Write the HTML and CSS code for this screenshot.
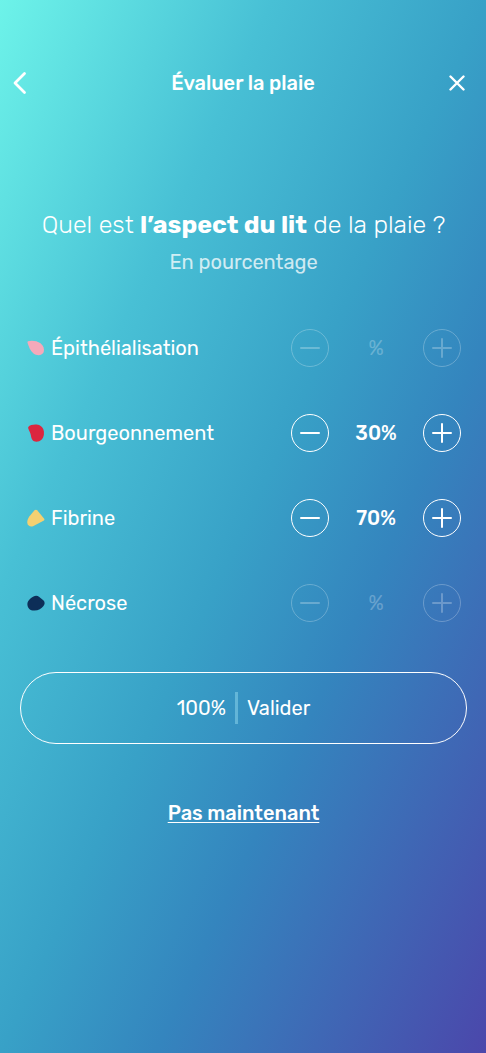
FILE: index.html
```html
<!DOCTYPE html>
<html lang="fr">
<head>
<meta charset="utf-8">
<meta name="viewport" content="width=device-width, initial-scale=1">
<title>Évaluer la plaie</title>
<link rel="stylesheet" href="styles.css">
</head>
<body>
<header class="topbar">
  <button class="icon-button" type="button" aria-label="Retour">
    <svg width="16" height="24" viewBox="0 0 16 24"><path d="M12.500 2.500L3 12L12.500 21.500" stroke-width="2.800"/></svg>
  </button>
  <h1 class="title">Évaluer la plaie</h1>
  <button class="icon-button" type="button" aria-label="Fermer">
    <svg width="16" height="16" viewBox="0 0 16 16"><path d="M1.500 1.500L14.500 14.500M14.500 1.500L1.500 14.500" stroke-width="2.400"/></svg>
  </button>
</header>
<main class="content">
  <h2 class="question">Quel est <strong>l’aspect du lit</strong> de la plaie ?</h2>
  <p class="hint">En pourcentage</p>
  <ul class="tissues">
    <li class="tissue">
      <svg class="swatch" width="18" height="18" viewBox="0 0 18 18"><path fill="#f5a9ba" d="M1 2.200C4 1.200 10 1.500 13.500 4.300C16.500 6.600 17.600 10 16.700 13C15.800 16.500 10 17.200 6.500 14.500C3.300 12 1.800 7.500.600 4C.400 3.200.500 2.500 1 2.200Z"/></svg>
      <span class="name">Épithélialisation</span>
      <div class="stepper">
        <button class="step" type="button" disabled aria-label="Diminuer Épithélialisation"><svg width="20" height="20" viewBox="0 0 20 20"><path d="M1 10H19"/></svg></button>
        <output class="value empty">%</output>
        <button class="step" type="button" disabled aria-label="Augmenter Épithélialisation"><svg width="20" height="20" viewBox="0 0 20 20"><path d="M1 10H19M10 1V19"/></svg></button>
      </div>
    </li>
    <li class="tissue">
      <svg class="swatch" width="18" height="18" viewBox="0 0 18 18"><path fill="#dc263f" d="M1.300 3C3.500.300 10 0 13 1.500C16 3 17.400 6.500 16.900 10.500C16.300 15 13.500 17.700 9.500 17.700C5.800 17.700 4.400 15.200 3.900 11.500C3.600 9 1.800 6.500 1.300 4.600C1.100 4 1 3.400 1.300 3Z"/></svg>
      <span class="name">Bourgeonnement</span>
      <div class="stepper">
        <button class="step" type="button" aria-label="Diminuer Bourgeonnement"><svg width="20" height="20" viewBox="0 0 20 20"><path d="M1 10H19"/></svg></button>
        <output class="value">30%</output>
        <button class="step" type="button" aria-label="Augmenter Bourgeonnement"><svg width="20" height="20" viewBox="0 0 20 20"><path d="M1 10H19M10 1V19"/></svg></button>
      </div>
    </li>
    <li class="tissue">
      <svg class="swatch" width="18" height="18" viewBox="0 0 18 18"><path fill="#f3d071" d="M7.500 1.300C8.400.400 9.600.500 10.400 1.400L17 9.500C17.700 10.500 17.600 11.200 16.500 11.800L6 17.200C3.500 18.300.700 16.800.300 14C0 11.800.900 9.300 2.500 7.200Z"/></svg>
      <span class="name">Fibrine</span>
      <div class="stepper">
        <button class="step" type="button" aria-label="Diminuer Fibrine"><svg width="20" height="20" viewBox="0 0 20 20"><path d="M1 10H19"/></svg></button>
        <output class="value">70%</output>
        <button class="step" type="button" aria-label="Augmenter Fibrine"><svg width="20" height="20" viewBox="0 0 20 20"><path d="M1 10H19M10 1V19"/></svg></button>
      </div>
    </li>
    <li class="tissue">
      <svg class="swatch" width="18" height="18" viewBox="0 0 18 18"><path fill="#0d2e58" d="M.400 10.500C.300 7 3 4.500 6.500 2.500C8.500 1.400 10.500 1.600 12.300 2.900L16.600 6.500C18 8.300 18 10 16.500 12C14.500 14.700 11.500 16.300 7.500 16.600C3.500 16.800.500 14.500.400 10.500Z"/></svg>
      <span class="name">Nécrose</span>
      <div class="stepper">
        <button class="step" type="button" disabled aria-label="Diminuer Nécrose"><svg width="20" height="20" viewBox="0 0 20 20"><path d="M1 10H19"/></svg></button>
        <output class="value empty">%</output>
        <button class="step" type="button" disabled aria-label="Augmenter Nécrose"><svg width="20" height="20" viewBox="0 0 20 20"><path d="M1 10H19M10 1V19"/></svg></button>
      </div>
    </li>
  </ul>
  <button class="submit" type="button"><span>100%</span><span class="divider"></span><span>Valider</span></button>
  <a class="skip" href="#">Pas maintenant</a>
</main>
</body>
</html>
```

FILE: styles.css
```css
* { box-sizing: border-box; }

body {
  margin: 0;
  min-height: 100vh;
  padding: 61px 0 40px;
  background: linear-gradient(to bottom right, #6df3e9 0%, #48c0d5 28%, #38a1c7 50%, #3485be 66%, #4b47ab 100%);
  color: #fff;
  font-family: Rubik, Roboto, sans-serif;
  font-size: 20px;
  line-height: 24px;
}

button {
  padding: 0;
  border: 0;
  background: none;
  color: inherit;
  font: inherit;
  cursor: pointer;
}

svg {
  display: block;
  fill: none;
  stroke: currentColor;
  stroke-linecap: round;
  stroke-linejoin: round;
}

.topbar {
  display: grid;
  grid-template-columns: 40px 1fr 40px;
  align-items: center;
  padding: 0 9px 0 0;
}

.icon-button {
  display: grid;
  place-items: center;
  height: 44px;
}

.title {
  margin: 0;
  padding-left: 9px;
  font-size: 20px;
  font-weight: 500;
  text-align: center;
}

.content {
  display: flex;
  flex-direction: column;
  padding: 104px 19px 0 20px;
}

.question {
  margin: 0;
  font-size: 25px;
  font-weight: 300;
  line-height: 32px;
  text-align: center;
}

.question strong { font-weight: 700; }

.hint {
  margin: 9px 0 0;
  opacity: 0.75;
  text-align: center;
}

.tissues {
  display: grid;
  gap: 47px;
  margin: 55px 6px 0 7px;
  padding: 0;
  list-style: none;
}

.tissue {
  display: flex;
  align-items: center;
}

.swatch { stroke: none; }

.name {
  flex: 1;
  padding-left: 6px;
}

.stepper {
  display: grid;
  grid-template-columns: 38px 94px 38px;
  align-items: center;
}

.step {
  display: grid;
  place-items: center;
  height: 38px;
  border: 1px solid #fff;
  border-radius: 50%;
}

.step svg { stroke-width: 2; }

.step:disabled { opacity: 0.25; }

.value {
  font-weight: 500;
  text-align: center;
}

.empty {
  font-weight: 400;
  opacity: 0.25;
}

.submit {
  display: flex;
  align-items: center;
  justify-content: center;
  gap: 9px;
  min-height: 72px;
  margin-top: 50px;
  border: 1px solid #fff;
  border-radius: 36px;
}

.divider {
  width: 3px;
  height: 32px;
  background: #8fd8ee;
  opacity: 0.5;
}

.skip {
  align-self: center;
  margin-top: 57px;
  color: inherit;
  font-weight: 500;
  text-decoration-thickness: 1px;
  text-underline-offset: 2px;
  text-decoration-skip-ink: none;
}
```
